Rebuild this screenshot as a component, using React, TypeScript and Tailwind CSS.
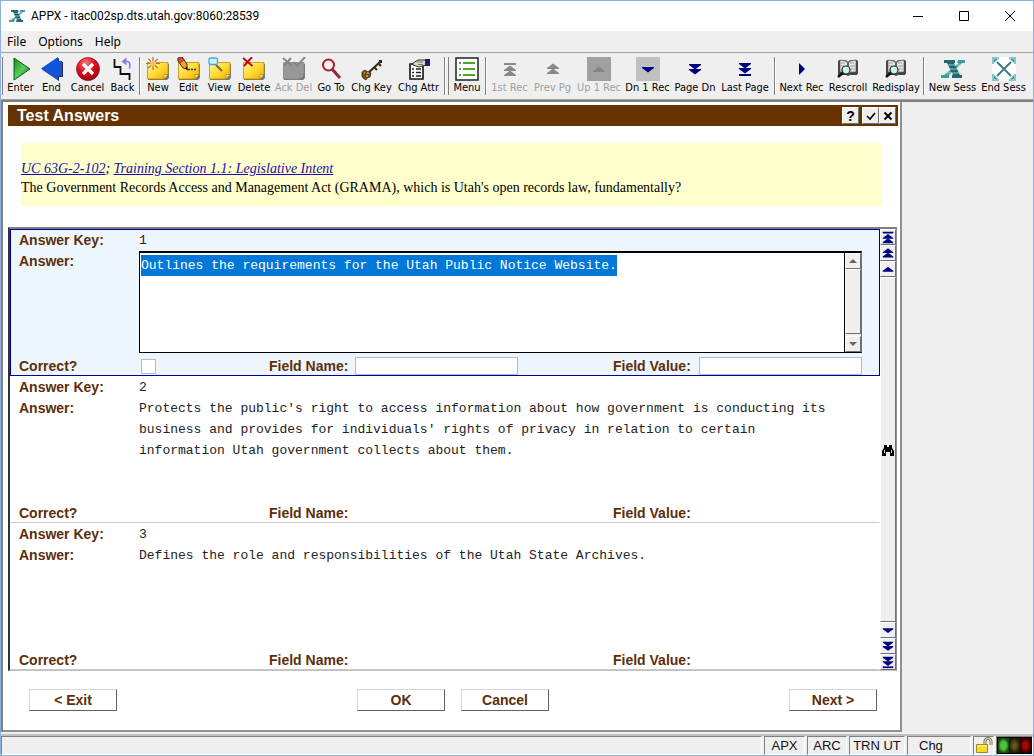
import { useEffect, useRef, useState } from "react";
import type { ReactNode } from "react";

const NAVY = "#000080";

function Arrow({ dir, count = 1, bar = false, color = NAVY }: { dir: "up" | "down"; count?: number; bar?: boolean; color?: string }) {
  const total = count * 5 + (bar ? 3 : 0);
  const start = Math.round((16 - total) / 2);
  const shapes: ReactNode[] = [];
  let y = start;
  if (bar && dir === "up") {
    shapes.push(<rect key="bar" x="2" y={y} width="12" height="2" />);
    y += 3;
  }
  for (let i = 0; i < count; i++) {
    shapes.push(
      <polygon key={i} points={dir === "up" ? `8,${y - 0.5} 14,${y + 4} 14,${y + 5} 2,${y + 5} 2,${y + 4}` : `2,${y} 14,${y} 14,${y + 1} 8,${y + 5.5} 2,${y + 1}`} />
    );
    y += 5;
  }
  if (bar && dir === "down") shapes.push(<rect key="bar" x="2" y={y + 1} width="12" height="2" />);
  return (
    <svg viewBox="0 0 16 16" className="h-full max-h-4 w-4" fill={color} aria-hidden="true">
      {shapes}
    </svg>
  );
}

function Svg({ children, className = "h-6 w-6" }: { children: ReactNode; className?: string }) {
  return (
    <svg viewBox="0 0 24 24" className={className + " shrink-0"} fill="none" aria-hidden="true">
      {children}
    </svg>
  );
}

function Logo({ className }: { className?: string }) {
  return (
    <Svg className={className}>
      <path d="M17 3h7v3h-3L8 18v3H0v-3h3L18 6h-2z" fill="#3f9c9c" />
      <path d="M3 3h11v3h-1l6 12h2v3H11v-3h1L6 6H3z" fill="#1f6a6c" />
      <path d="M6 8h14M8 12h10M4 16h16" stroke="#b9dcdc" strokeWidth="0.8" />
    </Svg>
  );
}

function Note({ children, gray = false }: { children?: ReactNode; gray?: boolean }) {
  return (
    <Svg>
      <defs>
        <linearGradient id="note" x1="0" y1="0" x2="1" y2="1">
          <stop offset="0" stopColor="#fff6a0" />
          <stop offset="0.45" stopColor="#ffdf3c" />
          <stop offset="1" stopColor="#f2ad00" />
        </linearGradient>
      </defs>
      <path d="M3 7h20v14l-2 2H2z" fill="#777" />
      <path d="M1.500 5.500h20.500v12l-4 4.500H1.500z" fill={gray ? "#989898" : "url(#note)"} stroke={gray ? "#858585" : "#c08a00"} strokeWidth="0.8" />
      <path d="M18 22v-4.500h4z" fill={gray ? "#b5b5b5" : "#fff2a0"} stroke={gray ? "#777" : "#b07800"} strokeWidth="0.7" />
      {children}
    </Svg>
  );
}

function Book() {
  return (
    <Svg>
      <path d="M2 4l1-1h7l2 2 2-2h7l1 1v12l-1 2h-7l-2 1-2-1H2z" fill="#444" />
      <path d="M4 3l6 1 1.500 2v11L9 15H4zM20 3l-6 1-1.500 2v11L15 15h5z" fill="#e8e8e8" stroke="#555" strokeWidth="0.7" />
      <path d="M5 6h4M5 9h3M14 6h4M14 9h5M14 12h5" stroke="#999" />
      <path d="M8 15l-6 5" stroke="#111" strokeWidth="2.500" />
      <circle cx="10" cy="13" r="4" fill="#c5f3f5" stroke="#222" strokeWidth="1.200" />
    </Svg>
  );
}

const icons: Record<string, ReactNode> = {
  Enter: (
    <Svg>
      <defs>
        <linearGradient id="enter" x1="0" y1="0" x2="1" y2="1">
          <stop offset="0" stopColor="#0e8f1c" />
          <stop offset="0.5" stopColor="#5ccb5c" />
          <stop offset="1" stopColor="#047a10" />
        </linearGradient>
      </defs>
      <path d="M5 1l16 11L5 23z" fill="url(#enter)" stroke="#04640d" />
    </Svg>
  ),
  End: (
    <Svg>
      <path d="M2 12.500L19 1v4h4v15h-4v4z" fill="#222a50" />
      <path d="M1 11.500L18 0v4h4v15h-4v4z" fill="#1054dc" />
    </Svg>
  ),
  Cancel: (
    <Svg>
      <defs>
        <radialGradient id="cancel" cx="0.4" cy="0.25" r="0.8">
          <stop offset="0" stopColor="#f77" />
          <stop offset="0.5" stopColor="#d71320" />
          <stop offset="1" stopColor="#950008" />
        </radialGradient>
      </defs>
      <circle cx="12" cy="12" r="11.500" fill="url(#cancel)" stroke="#84151b" strokeWidth="0.7" />
      <path d="M7 7l10 10M17 7L7 17" stroke="#fff" strokeWidth="3.200" />
    </Svg>
  ),
  Back: (
    <Svg>
      <path d="M3.500 2v8h6v7h9v6" stroke="#111" strokeWidth="1.800" />
      <path d="M14 4.500c4-1 6 2 4.500 7" stroke="#8080e8" strokeWidth="1.600" />
      <path d="M10.500 4.500l5-4v8z" fill="#8080e8" />
    </Svg>
  ),
  New: (
    <Note>
      <path d="M7 0v13M0 6.500h14M2.300 1.800l9.400 9.400M11.700 1.800l-9.400 9.400" stroke="#a8763a" strokeWidth="1.200" />
      <circle cx="7" cy="6.500" r="3" fill="#f5bd70" />
    </Note>
  ),
  Edit: (
    <Note>
      <path d="M1 1l4-1 5 7v5L6 11 1 4z" fill="#ed9f39" stroke="#482716" />
      <path d="M1 1l4-1 2 3-4 3-2-2z" fill="#ce4b36" stroke="#5b2b16" strokeWidth="0.600" />
      <path d="M8 11l2-1 1 4z" fill="#111" />
      <path d="M11 12.500h2M14 12.500h2M17 12.500h2" stroke="#333" strokeWidth="1.500" />
    </Note>
  ),
  View: (
    <Note>
      <path d="M8 8l6 6" stroke="#795d35" strokeWidth="1.800" />
      <rect x="1" y="1" width="8.500" height="6.500" rx="1.500" fill="#cbf0ff" stroke="#4aa5dd" strokeWidth="1.300" />
    </Note>
  ),
  Delete: (
    <Note>
      <path d="M1 1l9.500 8M10 0L2 9" stroke="#c40b16" strokeWidth="2" />
    </Note>
  ),
  "Ack Del": (
    <Note gray>
      <path d="M1 1l9 8M9 1L2 9M12 5l3 4 8-9" stroke="#858585" strokeWidth="2" />
    </Note>
  ),
  "Go To": (
    <Svg>
      <path d="M13 12l8 9" stroke="#962736" strokeWidth="3" />
      <circle cx="9.500" cy="8" r="5.500" fill="#f7f1ef" stroke="#a61f32" strokeWidth="2" />
    </Svg>
  ),
  "Chg Key": (
    <Svg>
      <path d="M7 17L20 5M14 10l3 3M18 6l3 3" stroke="#3a2d18" strokeWidth="2.200" />
      <path d="M19 3h3v3h-3z" fill="#2b2314" />
      <path d="M2 15l3-2 3 2 3 1-1 4-3 1-1 2-3-2-1-2z" fill="#71531d" stroke="#352612" strokeWidth="0.8" />
      <path d="M4 16h1M6 19h2M7 16h2" stroke="#d0a34c" strokeWidth="1.500" />
    </Svg>
  ),
  "Chg Attr": (
    <Svg>
      <path d="M3 7h13v15H3z" fill="#fff" stroke="#111" strokeWidth="1.600" />
      <path d="M5 12h2M5 15.500h2M5 19h2M9 12h5M9 15.500h5M9 19h5" stroke="#222" strokeWidth="1.400" />
      <path d="M6 6l5-3h8v5l-7 2-6-2z" fill="#ddd6c5" stroke="#333" />
      <path d="M10 5h6M11 7.500h5" stroke="#777" />
      <path d="M18 2h5v7h-5z" fill="#171c6d" />
    </Svg>
  ),
  Menu: (
    <Svg>
      <rect x="1" y="1" width="22" height="22" fill="#fff" stroke="#222" strokeWidth="1.500" />
      <path d="M8 6h12M8 12h12M8 18h12" stroke="#50a626" strokeWidth="1.800" />
      <path d="M4 6h2M4 12h2M4 18h2" stroke="#50a626" strokeWidth="1.800" />
    </Svg>
  ),
  "1st Rec": <Arrow dir="up" count={2} bar color="#888888" />,
  "Prev Pg": <Arrow dir="up" count={2} color="#888888" />,
  "Up 1 Rec": (
    <span className="flex h-6 w-6 items-center justify-center bg-[#a0a0a0]">
      <Arrow dir="up" color="#858585" />
    </span>
  ),
  "Dn 1 Rec": (
    <span className="flex h-6 w-6 items-center justify-center bg-[#c0c0c0]">
      <Arrow dir="down" />
    </span>
  ),
  "Page Dn": <Arrow dir="down" count={2} />,
  "Last Page": <Arrow dir="down" count={2} bar />,
  "Next Rec": (
    <Svg>
      <path d="M9 6l6 6-6 6z" fill={NAVY} />
    </Svg>
  ),
  Rescroll: <Book />,
  Redisplay: <Book />,
  "New Sess": <Logo className="h-6 w-6" />,
  "End Sess": (
    <Svg>
      <path d="M0 0h24v24H0z" fill="#fff" />
      <path d="M1 7V1h6M17 1h6v6M1 17v6h6M17 23h6v-6" stroke="#8cc5cb" strokeWidth="2" />
      <path d="M5 5l14 14M19 5L5 19" stroke="#397b83" strokeWidth="1.800" />
      <path d="M2 2h4L2 6zM22 2h-4l4 4zM2 22h4l-4-4zM22 22h-4l4-4z" fill="#4aa0a8" />
    </Svg>
  ),
};

const groups: { label: string; width: string; off?: boolean }[][] = [
  [
    { label: "Enter", width: "w-[31px]" },
    { label: "End", width: "w-[31px]" },
    { label: "Cancel", width: "w-[41px]" },
    { label: "Back", width: "w-[29px]" },
  ],
  [
    { label: "New", width: "w-[30px]" },
    { label: "Edit", width: "w-[31px]" },
    { label: "View", width: "w-[31px]" },
    { label: "Delete", width: "w-[38px]" },
    { label: "Ack Del", width: "w-[41px]", off: true },
    { label: "Go To", width: "w-[34px]" },
    { label: "Chg Key", width: "w-[47px]" },
    { label: "Chg Attr", width: "w-[47px]" },
  ],
  [{ label: "Menu", width: "w-[32px]" }],
  [
    { label: "1st Rec", width: "w-[41px]", off: true },
    { label: "Prev Pg", width: "w-[45px]", off: true },
    { label: "Up 1 Rec", width: "w-[48px]", off: true },
    { label: "Dn 1 Rec", width: "w-[49px]" },
    { label: "Page Dn", width: "w-[46px]" },
    { label: "Last Page", width: "w-[54px]" },
  ],
  [
    { label: "Next Rec", width: "w-[47px]" },
    { label: "Rescroll", width: "w-[46px]" },
    { label: "Redisplay", width: "w-[50px]" },
  ],
  [
    { label: "New Sess", width: "w-[51px]" },
    { label: "End Sess", width: "w-[51px]" },
  ],
];

function Separator() {
  return <span className="mx-0.5 h-[38px] w-0.5 shrink-0 border-l border-r border-l-[#808080] border-r-white" />;
}

function Toolbar() {
  return (
    <div className="flex items-center border-y border-t-[#a0a0a0] border-b-[#a0a0a0] pt-1 pb-1 pl-px">
      <span className="mr-0.5 h-[38px] w-px bg-[#808080]" />
      {groups.map((group, i) => (
        <div key={i} className="flex items-center">
          {i > 0 && <Separator />}
          {i === 2 && <span className="mr-0.5 h-[38px] w-px bg-[#808080]" />}
          {group.map((item) => (
            <button key={item.label} type="button" disabled={item.off} className={`flex flex-col items-center ${item.width} ${item.off ? "text-[#a0a0a0]" : "text-black"}`}>
              <span className="flex h-6 items-center">{icons[item.label]}</span>
              <span className="font-['DejaVu_Sans_Condensed','Noto_Sans',sans-serif] text-[11px] leading-[14px] whitespace-nowrap">{item.label}</span>
            </button>
          ))}
        </div>
      ))}
    </div>
  );
}

const bevel = "border border-t-white border-l-white border-r-[#707070] border-b-[#707070] bg-[#efefef]";

const label = "font-['Liberation_Sans',Arial,sans-serif] text-[14px] font-bold leading-[21px] text-[#5c2e0a]";
const mono = "font-['Liberation_Mono','Courier_New',monospace] text-[13px] leading-[21px]";

function ScrollBar() {
  return (
    <div className="flex w-[17px] shrink-0 flex-col border-l border-black bg-[#efefef]">
      <button type="button" aria-label="Scroll text up" className={`flex h-4 items-center justify-center ${bevel}`}>
        <svg viewBox="0 0 8 4" className="h-1 w-2" fill="#666" aria-hidden="true"><path d="M4 0l4 4H0z" /></svg>
      </button>
      <div className={`grow ${bevel}`} />
      <button type="button" aria-label="Scroll text down" className={`mt-0.5 flex h-4 items-center justify-center ${bevel}`}>
        <svg viewBox="0 0 8 4" className="h-1 w-2" fill="#666" aria-hidden="true"><path d="M0 0h8L4 4z" /></svg>
      </button>
    </div>
  );
}

function AnswerRow({ n, text, active = false }: { n: number; text: string; active?: boolean }) {
  const [value, setValue] = useState(text);
  const area = useRef<HTMLTextAreaElement>(null);
  useEffect(() => {
    area.current?.focus();
    area.current?.select();
  }, []);
  return (
    <section className={`flex h-[147px] flex-col border pr-[17px] pl-2 ${active ? "border-[#00009c] bg-[#edf6fd]" : "border-transparent border-b-[#c8c8c8] bg-white"}`}>
      <div className="flex">
        <span className={`w-[120px] ${label}`}>Answer Key:</span>
        <span className={`${mono} text-[#222]`}>{n}</span>
      </div>
      <div className="flex grow">
        <label htmlFor={`answer-${n}`} className={`w-[120px] shrink-0 ${label}`}>Answer:</label>
        {active ? (
          <div className="flex h-[102px] grow border border-t-2 border-r-[#707070] border-black bg-white">
            <textarea
              id={`answer-${n}`}
              ref={area}
              value={value}
              spellCheck={false}
              onChange={(e) => setValue(e.target.value)}
              className={`grow resize-none overflow-hidden bg-white px-px py-0.5 outline-none selection:bg-[#0078d7] selection:text-white ${mono}`}
            />
            <ScrollBar />
          </div>
        ) : (
          <output id={`answer-${n}`} className={`grow pr-6 text-[#222] ${mono}`}>{text}</output>
        )}
      </div>
      <div className="flex h-[18px] items-center">
        <label htmlFor={`correct-${n}`} className={`w-[120px] ${label}`}>Correct?</label>
        <span className="flex w-[130px] items-center px-0.5">
          {active && <input id={`correct-${n}`} type="checkbox" className="h-[15px] w-[15px] appearance-none border border-[#b8bcc8] bg-white checked:bg-[#5c2e0a]" />}
        </span>
        <label htmlFor={`name-${n}`} className={`w-[86px] ${label}`}>Field Name:</label>
        {active && <input id={`name-${n}`} className="h-[18px] w-[163px] border border-[#b4bcc8] bg-white px-1 text-[13px]" />}
        <span className="ml-auto flex w-[249px] items-center">
          <label htmlFor={`value-${n}`} className={`w-[86px] ${label}`}>Field Value:</label>
          {active && <input id={`value-${n}`} className="h-[18px] w-[163px] border border-[#b4bcc8] bg-white px-1 text-[13px]" />}
        </span>
      </div>
    </section>
  );
}

const answers = [
  "Outlines the requirements for the Utah Public Notice Website.",
  "Protects the public's right to access information about how government is conducting its business and provides for individuals' rights of privacy in relation to certain information Utah government collects about them.",
  "Defines the role and responsibilities of the Utah State Archives.",
];

function Nav({ name, children }: { name: string; children: ReactNode }) {
  return (
    <button type="button" aria-label={name} className={`flex h-4 w-full items-center justify-center ${bevel}`}>
      {children}
    </button>
  );
}

function RecordScroller() {
  return (
    <div className="flex w-4 shrink-0 flex-col bg-[#efefef]">
      <Nav name="First record"><Arrow dir="up" count={2} bar /></Nav>
      <Nav name="Previous page"><Arrow dir="up" count={2} /></Nav>
      <Nav name="Previous record"><Arrow dir="up" /></Nav>
      <div className={`flex grow items-center justify-center ${bevel}`}>
        <svg viewBox="0 0 12 12" className="h-3 w-3 shrink-0" fill="#000" aria-hidden="true">
          <path d="M2 1h3v2h2V1h3v3l2 3v5H8V8H4v4H0V7l2-3z" />
          <path d="M2.500 6v3M9.500 6v3" stroke="#fff" strokeWidth="0.8" />
        </svg>
      </div>
      <Nav name="Next record"><Arrow dir="down" /></Nav>
      <Nav name="Next page"><Arrow dir="down" count={2} /></Nav>
      <Nav name="Last record"><Arrow dir="down" count={2} bar /></Nav>
    </div>
  );
}

function FormButton({ children }: { children: ReactNode }) {
  return (
    <button type="button" className={`h-[22px] w-[88px] border border-t-[#d8d8d8] border-l-[#d8d8d8] border-r-[#606060] border-b-[#606060] bg-white ${label}`}>
      {children}
    </button>
  );
}

function HeaderButton({ name, children }: { name: string; children: ReactNode }) {
  return (
    <button type="button" aria-label={name} className={`flex h-[17px] w-[17px] items-center justify-center font-['Liberation_Sans',Arial,sans-serif] text-[14px] font-bold leading-none ${bevel}`}>
      {children}
    </button>
  );
}

function StatusCell({ children, className }: { children?: ReactNode; className: string }) {
  return (
    <div className={`flex h-[19px] items-center border border-t-[#808080] border-l-[#808080] border-r-white border-b-white font-['Liberation_Sans',Arial,sans-serif] text-[13px] text-[#111] ${className}`}>
      {children}
    </div>
  );
}

export default function App() {
  return (
    <div className="flex min-h-screen flex-col border border-[#8fb0e0] bg-[#efefef] font-['Noto_Sans',sans-serif] text-[12px] text-black">
      <header className="flex h-[30px] items-center bg-white pl-2">
        <Logo className="h-4 w-4" />
        <h1 className="ml-1.5 grow font-['Roboto',sans-serif] text-[12px] font-normal">APPX - itac002sp.dts.utah.gov:8060:28539</h1>
        <button type="button" aria-label="Minimize" className="flex h-full w-[46px] items-center justify-center">
          <svg viewBox="0 0 10 10" className="h-2.5 w-2.5" stroke="#000" aria-hidden="true"><path d="M0 5.500h10" /></svg>
        </button>
        <button type="button" aria-label="Maximize" className="flex h-full w-[46px] items-center justify-center">
          <svg viewBox="0 0 10 10" className="h-2.5 w-2.5" stroke="#000" fill="none" aria-hidden="true"><path d="M.5.5h9v9h-9z" /></svg>
        </button>
        <button type="button" aria-label="Close" className="flex h-full w-[46px] items-center justify-center">
          <svg viewBox="0 0 10 10" className="h-2.5 w-2.5" stroke="#000" aria-hidden="true"><path d="M0 0l10 10M10 0L0 10" /></svg>
        </button>
      </header>
      <nav className="flex h-[21px] items-center gap-3 pl-1.5">
        <button type="button">File</button>
        <button type="button">Options</button>
        <button type="button">Help</button>
      </nav>
      <Toolbar />
      <div className="flex grow border-t-2 border-l-2 border-[#808080]">
        <main className="flex grow flex-col border-r-2 border-b-2 border-[#909090] bg-white pt-[3px] pr-0.5 pl-[5px]">
          <div className="flex h-[21px] items-center bg-[#663300] pr-0.5 pl-[9px]">
            <h2 className="grow font-['Liberation_Sans',Arial,sans-serif] text-[16px] font-bold text-white">Test Answers</h2>
            <HeaderButton name="Help">?</HeaderButton>
            <span className="ml-[3px] flex">
              <HeaderButton name="Accept">
                <svg viewBox="0 0 10 10" className="h-2.5 w-2.5" fill="none" stroke="#000" strokeWidth="1.600" aria-hidden="true"><path d="M1 5l3 3 5-6" /></svg>
              </HeaderButton>
              <HeaderButton name="Close form">
                <svg viewBox="0 0 10 10" className="h-2.5 w-2.5" stroke="#000" strokeWidth="1.800" aria-hidden="true"><path d="M1.500 1.500l7 7M8.500 1.500l-7 7" /></svg>
              </HeaderButton>
            </span>
          </div>
          <div className="mt-[17px] mr-4 ml-[13px] h-[63px] bg-[#ffffce] pt-4 font-['Liberation_Serif','Times_New_Roman',serif] text-[14px] leading-[19px]">
            <p className="italic">
              <a href="#code" className="text-[#1a0dab] underline">UC 63G-2-102</a>; <a href="#training" className="text-[#1a0dab] underline">Training Section 1.1: Legislative Intent</a>
            </p>
            <p>The Government Records Access and Management Act (GRAMA), which is Utah's open records law, fundamentally?</p>
          </div>
          <div className="mt-[21px] mr-px flex border-t-2 border-r border-b border-l-2 border-t-[#808080] border-r-[#909090] border-b-[#c0c0c0] border-l-[#333]">
            <div className="grow">
              {answers.map((text, i) => (
                <AnswerRow key={i} n={i + 1} text={text} active={i === 0} />
              ))}
            </div>
            <RecordScroller />
          </div>
          <div className="mt-[18px] mb-4 flex justify-between px-[21px]">
            <FormButton>&lt; Exit</FormButton>
            <span className="flex gap-4">
              <FormButton>OK</FormButton>
              <FormButton>Cancel</FormButton>
            </span>
            <FormButton>Next &gt;</FormButton>
          </div>
        </main>
        <aside className="w-[131px] shrink-0" />
      </div>
      <footer className="mt-0.5 flex gap-0.5 border-t-2 border-[#c0c0c0]">
        <StatusCell className="grow" />
        <StatusCell className="w-[41px] justify-center">APX</StatusCell>
        <StatusCell className="w-[40px] justify-center">ARC</StatusCell>
        <StatusCell className="w-[56px] justify-center">TRN UT</StatusCell>
        <StatusCell className="w-[64px] pl-[11px]">Chg</StatusCell>
        <StatusCell className="w-[21px] justify-center">
          <svg viewBox="0 0 18 17" className="h-[17px] w-[18px]" fill="none" role="img" aria-label="Unlocked">
            <path d="M10 8V4.500a3 3 0 0 1 6 0V8" stroke="#77724a" strokeWidth="3" />
            <path d="M10 8V4.500a3 3 0 0 1 6 0V8" stroke="#e7e2b8" strokeWidth="1.200" />
            <path d="M1.500 7.500h11v8h-11z" fill="#f5d92a" stroke="#a58b13" />
            <path d="M2 9h10" stroke="#fff8a0" />
          </svg>
        </StatusCell>
        <StatusCell className="w-[37px] bg-black">
          <svg viewBox="0 0 35 17" className="h-[17px] w-[35px]" role="img" aria-label="Connection lights">
            <defs>
              <radialGradient id="green"><stop offset="0.5" stopColor="#4fc23c" /><stop offset="1" stopColor="#124a0c" /></radialGradient>
              <radialGradient id="amber"><stop offset="0.3" stopColor="#665818" /><stop offset="1" stopColor="#1e1a06" /></radialGradient>
              <radialGradient id="red"><stop offset="0.4" stopColor="#a00909" /><stop offset="1" stopColor="#300" /></radialGradient>
            </defs>
            <rect x="1" y="1" width="11" height="15" fill="url(#green)" />
            <rect x="12" y="1" width="11" height="15" fill="url(#amber)" />
            <rect x="23" y="1" width="11" height="15" fill="url(#red)" />
          </svg>
        </StatusCell>
      </footer>
    </div>
  );
}
